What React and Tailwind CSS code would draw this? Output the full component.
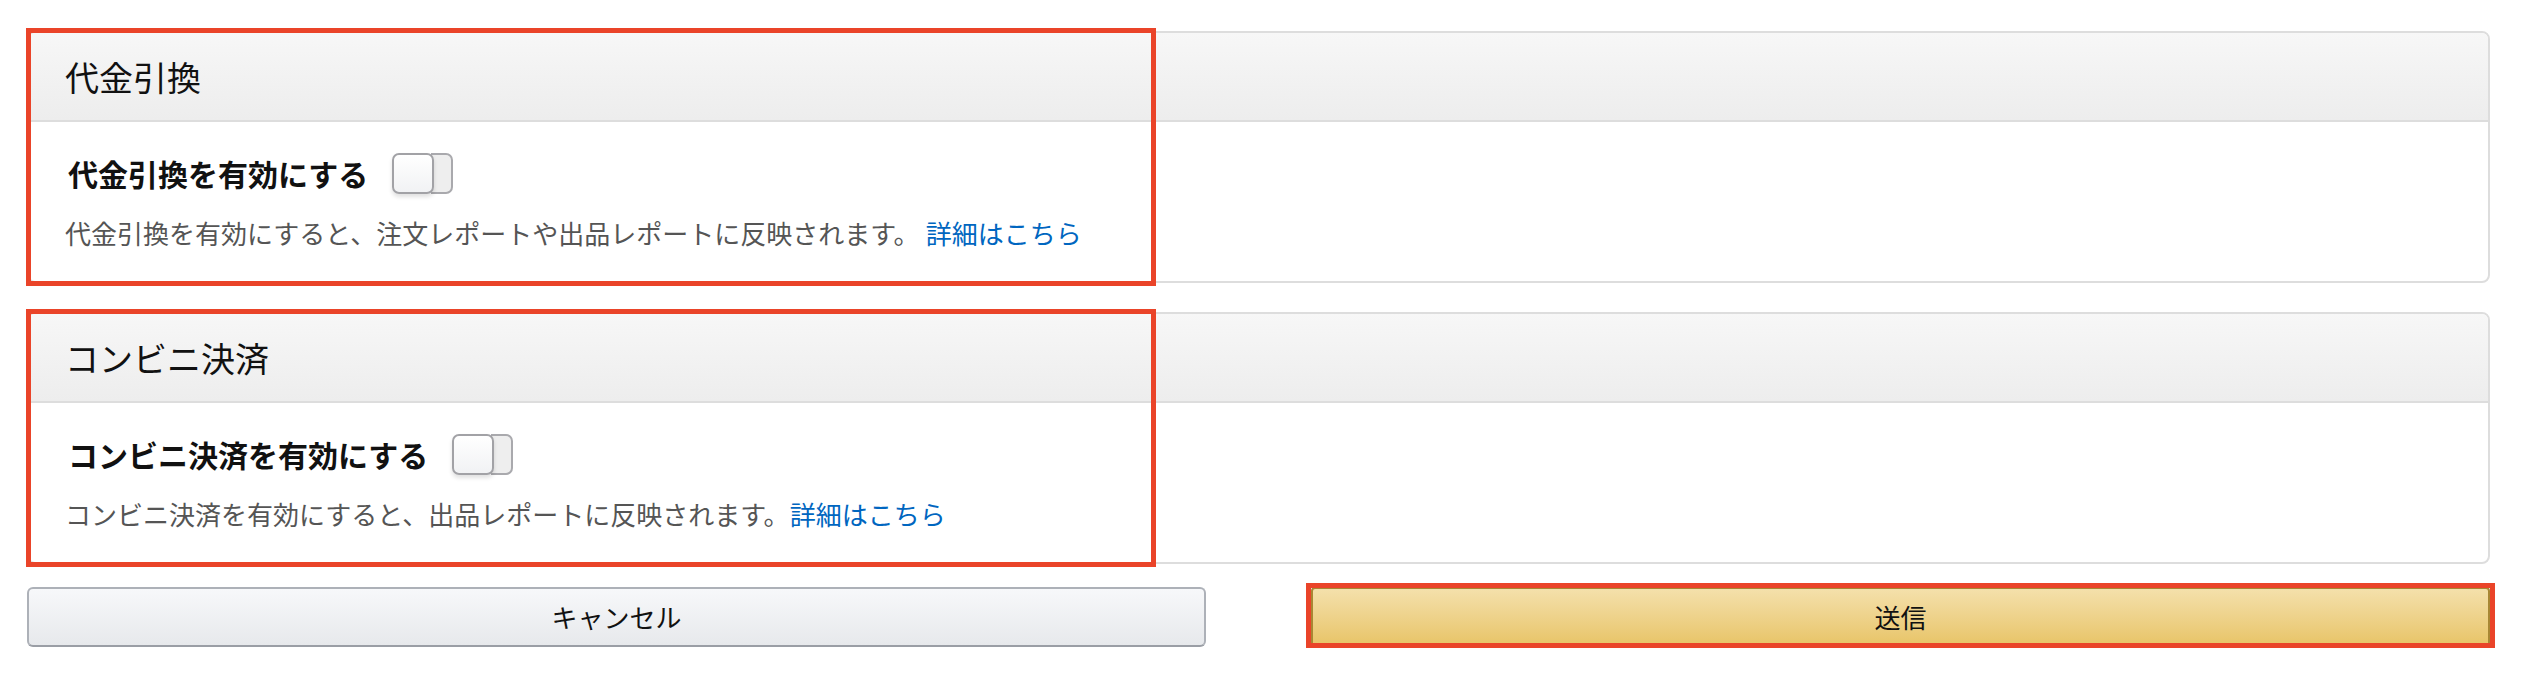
import React from "react";

const font = { fontFamily: '"Noto Sans CJK JP", "Noto Sans", sans-serif' };

function Toggle() {
    return (
        <div className="flex w-[61px] h-[41px] shrink-0">
            <div className="w-[42px] h-full rounded-[7px] border-2 border-[#a2a2a6] bg-gradient-to-b from-[#ffffff] to-[#f1f2f4] shadow-[0_3px_4px_rgba(0,0,0,0.12)] relative z-10" />
            <div className="flex-1 -ml-[3px] h-full rounded-r-[7px] border-2 border-l-0 border-[#a9a9ad] bg-[#eeeeee]" />
        </div>
    );
}

function SettingCard({ title, label, text, gap }) {
    return (
        <div className="relative">
            <section className="border-2 border-[#dddddd] rounded-[8px] overflow-hidden bg-white">
                <div className="h-[89px] flex items-center px-[36px] bg-gradient-to-b from-[#f7f7f7] to-[#ededed] border-b-2 border-[#dddddd]">
                    <h2 className="text-[34px] leading-[40px] font-normal text-[#111111]">{title}</h2>
                </div>
                <div className="px-[36px] pt-[31px] pb-[30px]">
                    <div className="flex items-center gap-[24px] pl-[3px]">
                        <span className="text-[30px] leading-[41px] font-bold text-[#111111]">{label}</span>
                        <Toggle />
                    </div>
                    <p className="mt-[21px] text-[26px] leading-[36px] text-[#555555]">
                        {text}
                        <a href="#" className={`text-[#0066c0] ${gap ? "ml-[6px]" : ""}`}>詳細はこちら</a>
                    </p>
                </div>
            </section>
            {/* annotation box */}
            <div className="absolute -left-[1px] -top-[3px] -bottom-[3px] w-[1130px] border-[5px] border-[#ea4429] pointer-events-none" />
        </div>
    );
}

export default function App() {
    return (
        <div className="min-h-screen bg-white pl-[27px] pr-[34px] pt-[31px]" style={font}>
            <SettingCard
                title="代金引換"
                label="代金引換を有効にする"
                text="代金引換を有効にすると、注文レポートや出品レポートに反映されます。"
                gap
            />
            <div className="mt-[29px]">
                <SettingCard
                    title="コンビニ決済"
                    label="コンビニ決済を有効にする"
                    text="コンビニ決済を有効にすると、出品レポートに反映されます。"
                />
            </div>

            <div className="grid grid-cols-2 gap-[105px] mt-[23px]">
                <button className="h-[60px] rounded-[6px] border-2 border-[#adb1b8] border-b-[#9a9ea5] bg-gradient-to-b from-[#f7f8fa] to-[#e7e9ec] text-[26px] leading-[36px] text-[#111111]">
                    キャンセル
                </button>
                <div className="relative">
                    <button className="w-full h-[60px] rounded-[4px] border-2 border-[#a88734] bg-gradient-to-b from-[#f4e0ab] to-[#e8c467] text-[26px] leading-[36px] text-[#111111]">
                        送信
                    </button>
                    <div className="absolute -left-[5px] -right-[5px] -top-[4px] -bottom-[1px] border-[5px] border-[#ea4429] pointer-events-none" />
                </div>
            </div>
        </div>
    );
}
